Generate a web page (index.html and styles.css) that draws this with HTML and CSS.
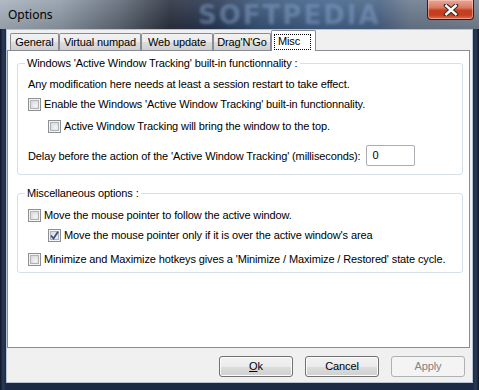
FILE: index.html
```html
<!DOCTYPE html>
<html lang="en">
<head>
  <meta charset="UTF-8" />
  <title>Options</title>
  <link rel="stylesheet" href="styles.css">
</head>
<body>

<div class="window">
  <div class="titlebar">
    <span class="title">Options</span>
    <span class="watermark">SOFTPEDIA</span>
    <div class="close">
      <svg width="16" height="12" viewBox="0 0 16 12">
        <path d="M3 1.5 L13 10.5 M13 1.5 L3 10.5" stroke="#3a2a28" stroke-width="4.5" stroke-linecap="round" />
        <path d="M3.3 1.8 L12.7 10.2 M12.7 1.8 L3.3 10.2" stroke="#fff" stroke-width="2.4" stroke-linecap="square" />
      </svg>
    </div>
  </div>

  <div class="client">
    <!-- tabs -->
    <div class="tabs">
      <div class="tab w-general">General</div>
      <div class="tab w-numpad">Virtual numpad</div>
      <div class="tab w-web">Web update</div>
      <div class="tab w-drag">Drag'N'Go</div>
      <div class="tab active w-misc"><span class="focus">Misc</span></div>
    </div>

    <div class="panel">
      <fieldset class="group first">
        <legend>Windows 'Active Window Tracking' built-in functionnality :</legend>
        <div class="note">Any modification here needs at least a session restart to take effect.</div>
        <div class="check row1"><span class="box"></span>Enable the Windows 'Active Window Tracking' built-in functionnality.</div>
        <div class="check sub row2"><span class="box"></span>Active Window Tracking will bring the window to the top.</div>
        <div class="delay">Delay before the action of the 'Active Window Tracking' (milliseconds):<span class="input">0</span></div>
      </fieldset>

      <fieldset class="group second">
        <legend>Miscellaneous options :</legend>
        <div class="check rowa"><span class="box"></span>Move the mouse pointer to follow the active window.</div>
        <div class="check sub rowb"><span class="box checked">
          <svg width="9" height="9" viewBox="0 0 9 9"><path d="M1 4.5 L3.5 7.5 L8 0.8" fill="none" stroke="#3b4f86" stroke-width="1.8" /></svg>
        </span>Move the mouse pointer only if it is over the active window's area</div>
        <div class="check rowc"><span class="box"></span>Minimize and Maximize hotkeys gives a 'Minimize / Maximize / Restored' state cycle.</div>
      </fieldset>
    </div>

    <div class="buttons">
      <div class="btn"><u>O</u>k</div>
      <div class="btn">Cancel</div>
      <div class="btn disabled">Apply</div>
    </div>
  </div>
</div>

</body>
</html>
```

FILE: styles.css
```css
body {
  margin: 0;
  padding: 0;
  background: #1a2640;
  font-family: 'Liberation Sans', Arial, sans-serif;
  font-size: 11px;
  letter-spacing: -0.12px;
  color: #000;
}
.window {
  width: 479px;
  height: 390px;
  box-sizing: border-box;
  padding: 0 6px 7px 6px;
  display: flex;
  flex-direction: column;
  background: linear-gradient(to right, #0e1626 0px, #2a3a58 3px, #1c2a45 6px, #1c2a45 473px, #2a3a58 476px, #0e1626 479px);
  position: relative;
  overflow: hidden;
}
.titlebar {
  height: 29px;
  margin: 0 -6px;
  padding: 0 6px 0 8px;
  display: flex;
  align-items: flex-start;
  position: relative;
  overflow: hidden;
  background:
    linear-gradient(to bottom, rgba(255,255,255,0.1), rgba(0,0,0,0.12)),
    linear-gradient(to right, #a9b3be 0px, #919daa 60px, #606a77 120px, #2c3240 170px, #283752 210px, #3a5679 260px, #45648c 330px, #4b6486 380px, #6c7b8f 410px, #7a8594 479px);
}
.title {
  font-family: 'Noto Sans', 'Liberation Sans', sans-serif;
  font-size: 12px;
  letter-spacing: 0;
  line-height: 30px;
  color: #000;
  position: relative;
  z-index: 1;
}
.watermark {
  position: absolute;
  left: 198px;
  top: 2px;
  font-family: 'DejaVu Sans', sans-serif;
  font-weight: bold;
  font-size: 26px;
  line-height: 26px;
  letter-spacing: 2px;
  color: #7f9dc4;
  opacity: 0.55;
  filter: blur(1.4px);
}
.close {
  margin-left: auto;
  margin-right: -1px;
  width: 45px;
  height: 19px;
  border: 1px solid #3b1a14;
  border-top: none;
  border-radius: 0 0 4px 4px;
  display: flex;
  align-items: center;
  justify-content: center;
  background: linear-gradient(to bottom, #e9a898 0%, #d97a62 40%, #c2401f 55%, #c83d1f 80%, #e0704e 100%);
  box-shadow: inset 0 0 0 1px rgba(255,220,210,0.45);
  position: relative;
  z-index: 1;
}
.client {
  flex: 1;
  background: #f0f0f0;
  border: 1px solid #b8c4d2;
  display: flex;
  flex-direction: column;
}
.tabs {
  height: 20px;
  display: flex;
  align-items: flex-end;
  padding-left: 3px;
}
.tab {
  height: 17px;
  box-sizing: border-box;
  border: 1px solid #898c95;
  border-bottom: none;
  border-radius: 2px 2px 0 0;
  background: linear-gradient(to bottom, #f2f2f2 0%, #ebebeb 50%, #dddddd 51%, #cfcfcf 100%);
  text-align: center;
  line-height: 17px;
  white-space: nowrap;
}
.w-general { width: 49px; }
.w-numpad { width: 82px; }
.w-web { width: 72px; }
.w-drag { width: 58px; }
.w-misc { width: 45px; }
.tab.active {
  height: 21px;
  margin-bottom: -1px;
  background: #fff;
  position: relative;
  z-index: 1;
  text-align: left;
  padding: 2px 0 0 2px;
}
.focus {
  display: inline-block;
  border: 1px dotted #000;
  line-height: 13px;
  padding: 0 10px 1px 3px;
}
.panel {
  height: 298px;
  box-sizing: border-box;
  margin-right: 2px;
  border: 1px solid #898c95;
  background: #fff;
  padding: 6px 6px 0 9px;
}
.group {
  margin: 0;
  border: 1px solid #d5dfe5;
  border-radius: 3px;
  padding: 8px 8px 8px 10px;
}
.group legend {
  line-height: 13px;
  padding: 0 2px;
  margin-left: -3px;
}
.group.second {
  margin-top: 12px;
  padding-top: 8px;
  padding-bottom: 6px;
}
.note {
  line-height: 13px;
  white-space: nowrap;
}
.check {
  display: flex;
  align-items: center;
  height: 14px;
  white-space: nowrap;
}
.check.sub {
  margin-left: 20px;
}
.row1 { margin-top: 6px; }
.row2 { margin-top: 8px; }
.rowb { margin-top: 6px; }
.rowc { margin-top: 10px; }
.box {
  width: 13px;
  height: 13px;
  box-sizing: border-box;
  border: 1px solid #8e8f8f;
  background: #f4f4f4;
  box-shadow: inset 0 0 0 1px #f4f4f4, inset 0 0 0 2px #aeb3b9, inset 1px 1px 3px 3px #dcdde0;
  margin-right: 3px;
  display: flex;
  align-items: center;
  justify-content: center;
  flex: none;
}
.delay {
  display: flex;
  align-items: center;
  margin-top: 12px;
  gap: 5px;
  white-space: nowrap;
}
.input {
  width: 49px;
  height: 21px;
  box-sizing: border-box;
  border: 1px solid #abadb3;
  border-radius: 2px;
  padding-left: 6px;
  line-height: 19px;
  background: #fff;
}
.buttons {
  flex: 1;
  display: flex;
  justify-content: flex-end;
  align-items: flex-start;
  padding: 8px 7px 0 0;
  gap: 12px;
}
.btn {
  width: 74px;
  height: 21px;
  box-sizing: border-box;
  border: 1px solid #707070;
  border-radius: 3px;
  background: linear-gradient(to bottom, #f2f2f2 0%, #ebebeb 50%, #dddddd 51%, #cfcfcf 100%);
  box-shadow: inset 0 0 0 1px #fcfcfc;
  text-align: center;
  line-height: 19px;
}
.btn.disabled {
  border-color: #adb2b5;
  background: #f4f4f4;
  box-shadow: none;
  color: #838383;
}
```
